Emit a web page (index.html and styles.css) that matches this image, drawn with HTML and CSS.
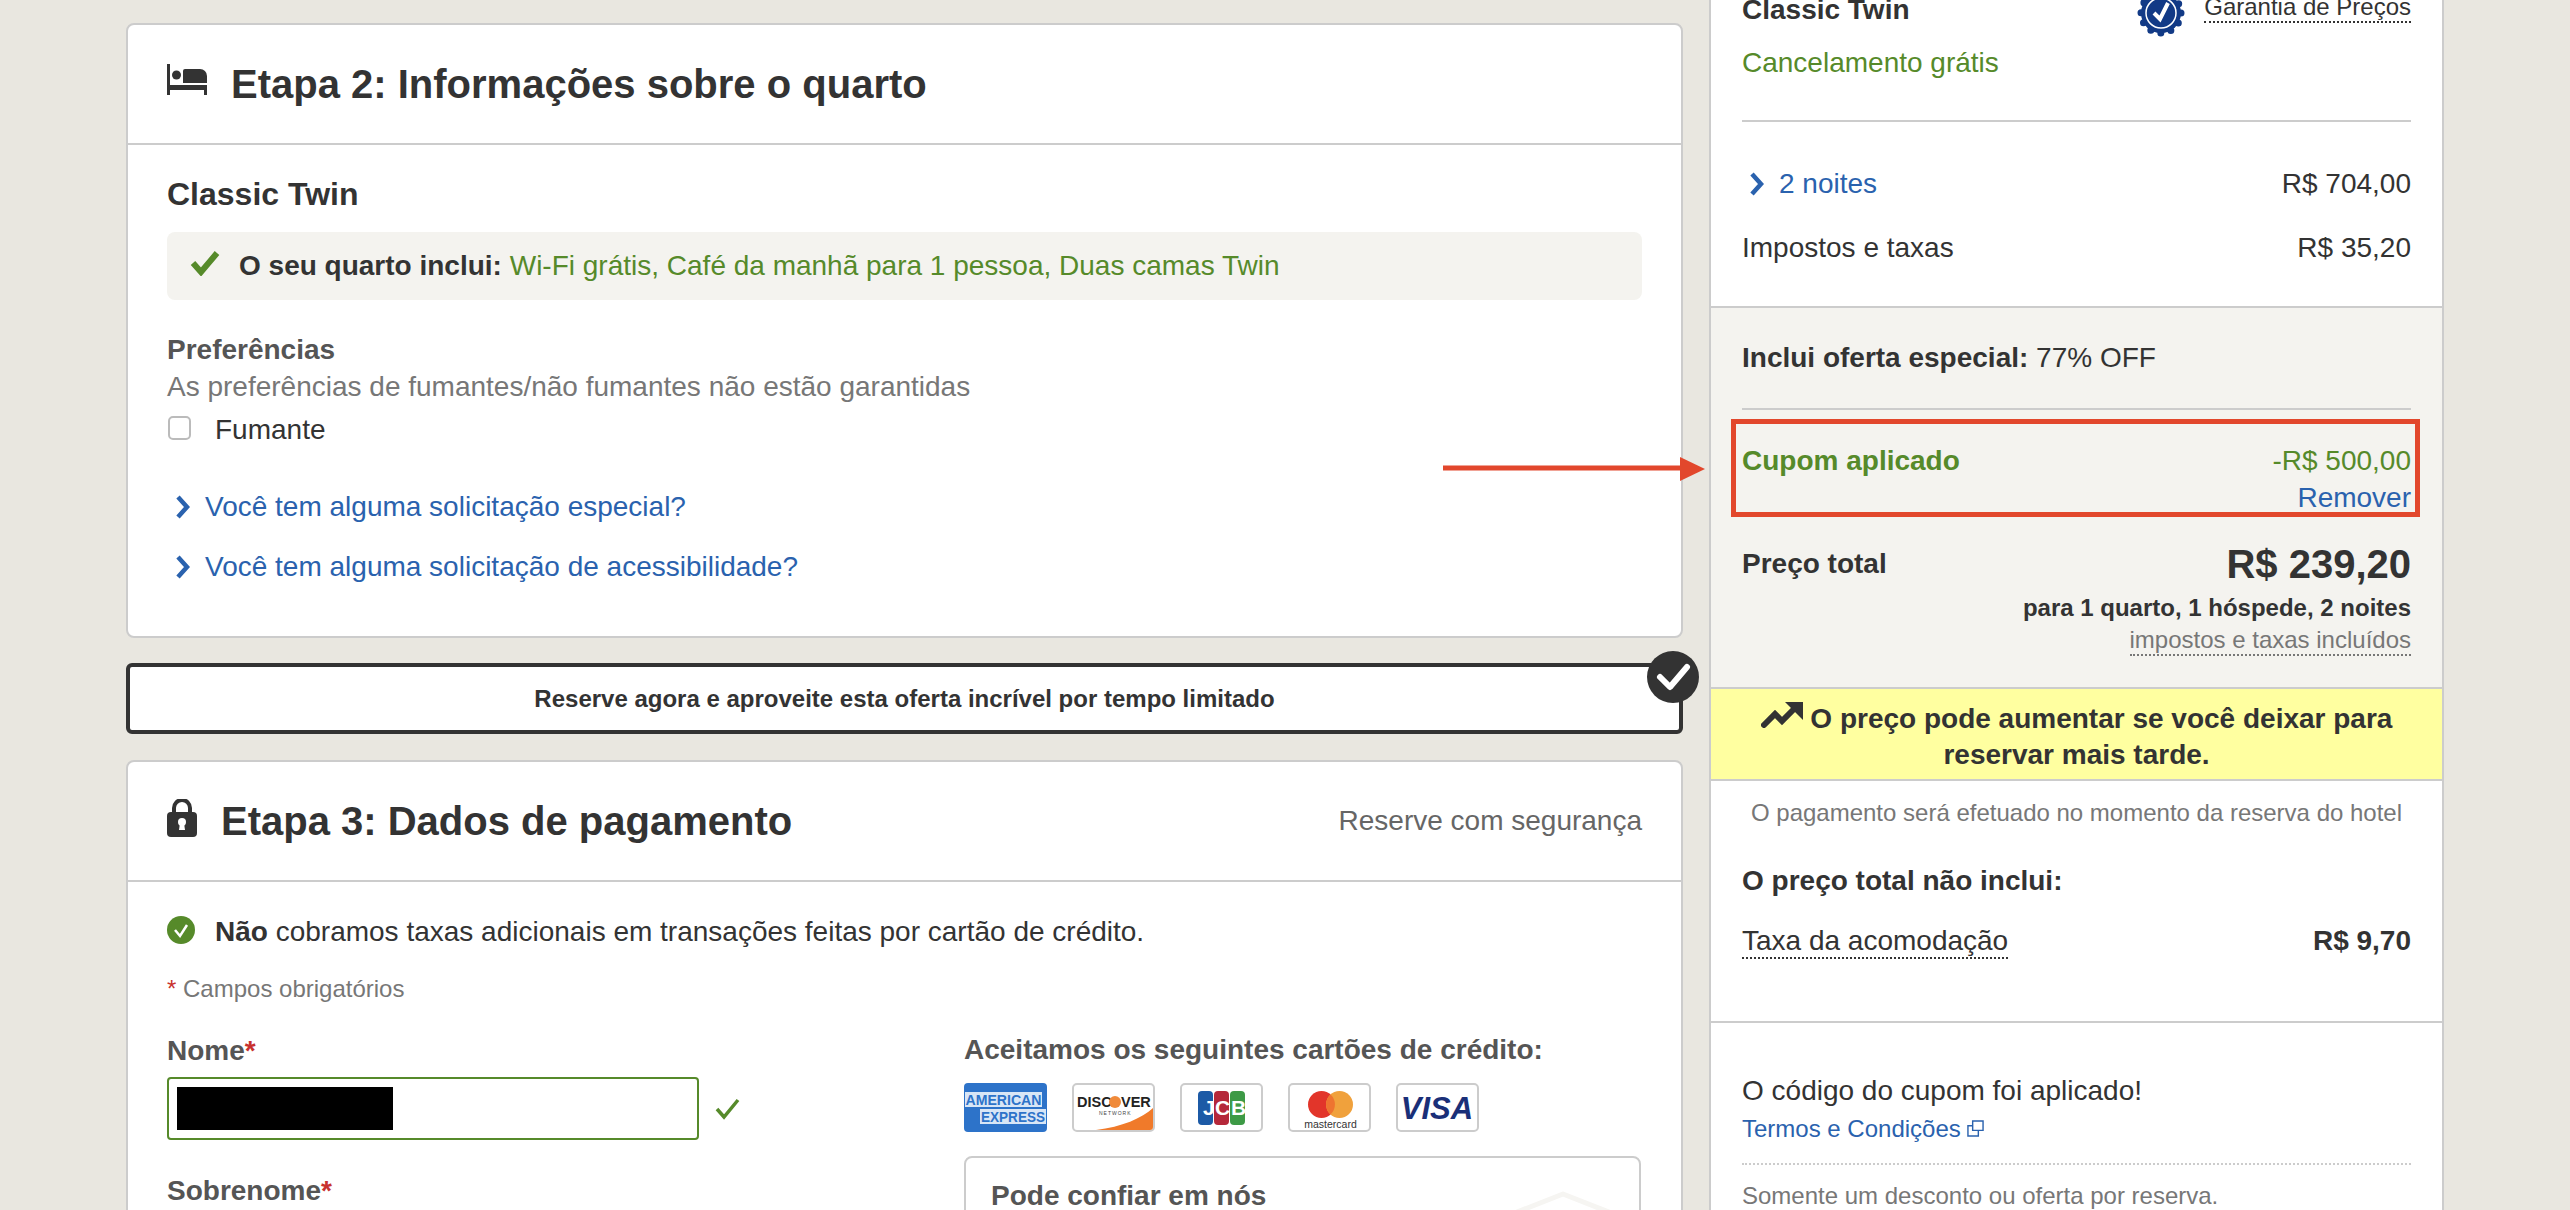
FILE: index.html
```html
<!DOCTYPE html>
<html lang="pt-BR">
<head>
  <meta charset="UTF-8" />
  <meta name="viewport" content="width=device-width, initial-scale=1" />
  <title>Etapa 2: Informações sobre o quarto</title>
  <link rel="stylesheet" href="styles.css">
</head>
<body>
  <div class="page">
    <main class="main-col">
      <section class="card">
        <header class="card-head">
          <svg class="icon-bed" viewBox="0 0 40 31"><path d="M0 0h3v21h37v10h-3v-5H3v5H0z" fill="#333"/><circle cx="9.500" cy="11" r="4.500" fill="#333"/><path d="M16 7a2 2 0 0 1 2-2h15a7 7 0 0 1 7 7v7H16z" fill="#333"/></svg>
          <h2 class="card-title">Etapa 2: Informações sobre o quarto</h2>
        </header>
        <div class="card-body room-body">
          <h3 class="room-name">Classic Twin</h3>
          <div class="includes">
            <svg class="icon-check" viewBox="0 0 30 25"><path d="M3 12l8 9L27 2" fill="none" stroke="#568a2a" stroke-width="6"/></svg>
            <b>O seu quarto inclui:</b>&nbsp;<span class="green">Wi-Fi grátis, Café da manhã para 1 pessoa, Duas camas Twin</span>
          </div>
          <div class="pref-title">Preferências</div>
          <div class="pref-note">As preferências de fumantes/não fumantes não estão garantidas</div>
          <label class="smoke"><span class="checkbox"></span>Fumante</label>
          <a class="more-link first-link"><svg class="chevron" viewBox="0 0 15 24"><path d="M3 2l9 10-9 10" fill="none" stroke="#2a62ae" stroke-width="4.500"/></svg>Você tem alguma solicitação especial?</a>
          <a class="more-link second-link"><svg class="chevron" viewBox="0 0 15 24"><path d="M3 2l9 10-9 10" fill="none" stroke="#2a62ae" stroke-width="4.500"/></svg>Você tem alguma solicitação de acessibilidade?</a>
        </div>
      </section>

      <div class="promo">Reserve agora e aproveite esta oferta incrível por tempo limitado</div>

      <section class="card pay-card">
        <header class="card-head">
          <svg class="icon-lock" viewBox="0 0 30 38"><path d="M7 15V9a8 8 0 0 1 16 0v6" fill="none" stroke="#333" stroke-width="4"/><rect y="13" width="30" height="25" rx="4" fill="#333"/><circle cx="15" cy="23" r="4" fill="#fff"/><path d="M13 24h4l1 7h-6z" fill="#fff"/></svg>
          <h2 class="card-title">Etapa 3: Dados de pagamento</h2>
          <span class="secure">Reserve com segurança</span>
        </header>
        <div class="card-body pay-body">
          <div class="no-fee">
            <svg class="icon-ok" viewBox="0 0 28 28"><circle cx="14" cy="14" r="14" fill="#568a2a"/><path d="M8 14l5 6 7-11" fill="none" stroke="#fff" stroke-width="2.500"/></svg>
            <span><b>Não</b> cobramos taxas adicionais em transações feitas por cartão de crédito.</span>
          </div>
          <div class="required"><span class="star">*</span> Campos obrigatórios</div>
          <div class="pay-grid">
            <div class="form-col">
              <label class="field-label">Nome<span class="star">*</span></label>
              <div class="field-row">
                <div class="field-input"><span class="redacted"></span></div>
                <svg class="icon-valid" viewBox="0 0 25 22"><path d="M2 11l7 8L23 2" fill="none" stroke="#568a2a" stroke-width="3.500"/></svg>
              </div>
              <label class="field-label last-name">Sobrenome<span class="star">*</span></label>
            </div>
            <div class="cards-col">
              <div class="cards-title">Aceitamos os seguintes cartões de crédito:</div>
              <div class="card-logos">
                <svg class="logo" viewBox="0 0 83 49"><rect width="83" height="49" rx="4" fill="#2d73c9"/><rect x="1" y="9" width="77" height="15" fill="#d8e6f6"/><rect x="16" y="26" width="66" height="15" fill="#d8e6f6"/><text x="1.500" y="22" class="t-amex" textLength="76" lengthAdjust="spacingAndGlyphs">AMERICAN</text><text x="17" y="39" class="t-amex" textLength="64" lengthAdjust="spacingAndGlyphs">EXPRESS</text></svg>
                <svg class="logo logo-line" viewBox="0 0 83 49"><rect x="1" y="1" width="81" height="47" rx="4" fill="#fff" stroke="#ccc" stroke-width="2"/><path d="M24 47c26-3 46-12 57-22v19a3 3 0 0 1-3 3z" fill="#f07a2a"/><text x="5" y="24" class="t-disc">DISC</text><circle cx="43" cy="19" r="6" fill="#f08a3a"/><text x="49" y="24" class="t-disc">VER</text><text x="27" y="32" class="t-net">NETWORK</text></svg>
                <svg class="logo logo-line" viewBox="0 0 83 49"><rect x="1" y="1" width="81" height="47" rx="4" fill="#fff" stroke="#ccc" stroke-width="2"/><rect x="18" y="8" width="15" height="34" rx="4" fill="#1c5aa6"/><rect x="34" y="8" width="15" height="34" rx="4" fill="#b5283a"/><rect x="50" y="8" width="15" height="34" rx="4" fill="#3d9a46"/><text x="23" y="32" class="t-jcb">J</text><text x="35" y="32" class="t-jcb">C</text><text x="51" y="32" class="t-jcb">B</text></svg>
                <svg class="logo logo-line" viewBox="0 0 83 49"><rect x="1" y="1" width="81" height="47" rx="4" fill="#fff" stroke="#ccc" stroke-width="2"/><circle cx="33.500" cy="21.500" r="13.500" fill="#e2352a"/><circle cx="51.500" cy="21.500" r="13.500" fill="#f0a13c"/><path d="M42.500 11.500a13.500 13.500 0 0 1 0 20 13.500 13.500 0 0 1 0-20z" fill="#ee7430"/><text x="42.500" y="45" class="t-mc">mastercard</text></svg>
                <svg class="logo logo-line" viewBox="0 0 83 49"><rect x="1" y="1" width="81" height="47" rx="4" fill="#fff" stroke="#ccc" stroke-width="2"/><text x="41" y="36" class="t-visa">VISA</text></svg>
              </div>
              <div class="trust-box">
                <svg class="trust-mark" viewBox="0 0 120 90"><path d="M60 3l56 22v62H4V25z" fill="none" stroke="#f6f5f2" stroke-width="5" stroke-linejoin="round"/></svg>
                <div class="trust-title">Pode confiar em nós</div>
              </div>
            </div>
          </div>
        </div>
      </section>
    </main>

    <aside class="summary">
      <section class="sum-part sum-room">
        <div class="room-top">
          <b class="sum-room-name">Classic Twin</b>
          <span class="guarantee">
            <svg class="badge" viewBox="0 0 48 48"><circle cx="24" cy="24" r="20" fill="#123a86" stroke="#123a86" stroke-width="7" stroke-linecap="round" stroke-dasharray="0 10.470"/><circle cx="24" cy="24" r="15" fill="none" stroke="#fff" stroke-width="1.500"/><path d="M17 24l6 6 8-16" fill="none" stroke="#fff" stroke-width="4"/></svg>
            <span class="dotted">Garantia de Preços</span>
          </span>
        </div>
        <div class="cancel green">Cancelamento grátis</div>
        <div class="sum-line"></div>
        <div class="sum-row nights-row">
          <a class="nights"><svg class="chevron chevron-sum" viewBox="0 0 15 24"><path d="M3 2l9 10-9 10" fill="none" stroke="#2a62ae" stroke-width="4.500"/></svg>2 noites</a>
          <span>R$ 704,00</span>
        </div>
        <div class="sum-row taxes-row"><span>Impostos e taxas</span><span>R$ 35,20</span></div>
      </section>

      <section class="sum-part sum-grey">
        <div class="offer"><b>Inclui oferta especial:</b> 77% OFF</div>
        <div class="sum-line offer-line"></div>
        <div class="sum-row coupon-row green"><b>Cupom aplicado</b><span>-R$ 500,00</span></div>
        <div class="remove-row"><a class="blue">Remover</a></div>
        <div class="sum-row total-row"><b class="total-label">Preço total</b><b class="total-price">R$ 239,20</b></div>
        <div class="total-for">para 1 quarto, 1 hóspede, 2 noites</div>
        <div class="total-inc"><span class="dotted-grey">impostos e taxas incluídos</span></div>
      </section>

      <section class="sum-warn">
        <svg class="icon-trend" viewBox="0 0 42 26"><path d="M3 23l11-11 7 7L34 6" fill="none" stroke="#333" stroke-width="6" stroke-linecap="round"/><path d="M24 0h18v18z" fill="#333"/></svg>
        O preço pode aumentar se você deixar para reservar mais tarde.
      </section>

      <section class="sum-part sum-extra">
        <div class="pay-note">O pagamento será efetuado no momento da reserva do hotel</div>
        <div class="not-inc">O preço total não inclui:</div>
        <div class="sum-row fee-row"><span class="dotted">Taxa da acomodação</span><b>R$ 9,70</b></div>
      </section>

      <section class="sum-part sum-coupon">
        <div class="coupon-ok">O código do cupom foi aplicado!</div>
        <div class="terms"><a class="blue">Termos e Condições</a><svg class="icon-ext" viewBox="0 0 18 18"><path d="M6 1h11v10H6zM6 6H1v11h11v-6" fill="none" stroke="#2a62ae" stroke-width="1.500"/></svg></div>
        <div class="coupon-line"></div>
        <div class="only-one">Somente um desconto ou oferta por reserva.</div>
      </section>
    </aside>
  </div>

  <!-- marcas por cima da captura -->
  <div class="mark-check">
    <svg viewBox="0 0 52 52"><circle cx="26" cy="26" r="26" fill="#333"/><path d="M13 26l10 10 17-20" fill="none" stroke="#fff" stroke-width="6" stroke-linecap="round" stroke-linejoin="round"/></svg>
  </div>
  <svg class="mark-arrow" viewBox="0 0 264 26"><path d="M1 12h238" stroke="#e2472c" stroke-width="5"/><path d="M238 1l25 12-25 12z" fill="#e2472c"/></svg>
  <div class="mark-box"></div>
</body>
</html>
```

FILE: styles.css
```css
* {
  box-sizing: border-box;
}
html, body {
  margin: 0;
  height: 1210px;
  overflow: hidden;
}
body {
  background: #e9e7e0;
  color: #333;
  font-family: "Liberation Sans", Arial, sans-serif;
  font-size: 28px;
  position: relative;
}
a {
  text-decoration: none;
}
h2, h3 {
  margin: 0;
}
.green { color: #568a2a; }
.blue { color: #2a62ae; }
.star { color: #c8322e; }

.page {
  display: flex;
  align-items: flex-start;
  gap: 26px;
  padding-left: 126px;
}
.main-col {
  width: 1557px;
  flex: none;
  padding-top: 23px;
}
.card {
  background: #fff;
  border: 2px solid #ccc;
  border-radius: 8px;
}
.card-head {
  height: 120px;
  padding: 0 39px;
  display: flex;
  align-items: center;
  border-bottom: 2px solid #ccc;
}
.card-title {
  font-size: 40px;
  line-height: 46px;
}
.icon-bed {
  width: 40px;
  height: 31px;
  margin: -10px 24px 0 0;
}
.icon-lock {
  width: 30px;
  height: 38px;
  margin: -6px 24px 0 0;
}
.secure {
  margin-left: auto;
  color: #666;
  font-size: 28px;
}
.card-body {
  padding: 0 39px;
}
.room-body {
  padding-top: 31px;
  padding-bottom: 49px;
}
.room-name {
  font-size: 32px;
  line-height: 36px;
}
.includes {
  height: 68px;
  margin-top: 20px;
  padding-left: 23px;
  display: flex;
  align-items: center;
  background: #f4f3ef;
  border-radius: 8px;
}
.icon-check {
  width: 30px;
  height: 25px;
  margin: -6px 19px 0 0;
}
.pref-title {
  margin-top: 34px;
  font-weight: bold;
  line-height: 32px;
  color: #555;
}
.pref-note {
  line-height: 42px;
  color: #777;
}
.smoke {
  display: flex;
  align-items: center;
  line-height: 42px;
  margin-top: 1px;
}
.checkbox {
  width: 23px;
  height: 24px;
  margin: -4px 24px 0 1px;
  border: 2px solid #bbb;
  border-radius: 5px;
}
.more-link {
  display: flex;
  align-items: center;
  line-height: 40px;
  color: #2a62ae;
}
.first-link { margin-top: 36px; }
.second-link { margin-top: 20px; }
.chevron {
  width: 15px;
  height: 24px;
  margin: 0 15px 0 8px;
}
.promo {
  height: 71px;
  margin-top: 25px;
  background: #fff;
  border: 4px solid #333;
  border-radius: 6px;
  font-size: 24px;
  font-weight: bold;
  line-height: 63px;
  text-align: center;
}
.pay-card {
  margin-top: 26px;
}
.pay-body {
  padding-top: 30px;
}
.no-fee {
  display: flex;
  align-items: center;
  line-height: 40px;
}
.icon-ok {
  width: 28px;
  height: 28px;
  margin: -4px 20px 0 0;
}
.required {
  margin-top: 22px;
  color: #777;
  font-size: 24px;
  line-height: 30px;
}
.pay-grid {
  display: grid;
  grid-template-columns: 797px 677px;
}
.field-label {
  display: block;
  margin-top: 29px;
  font-weight: bold;
  line-height: 36px;
  color: #555;
}
.last-name {
  margin-top: 33px;
}
.field-row {
  margin-top: 8px;
  display: flex;
  align-items: center;
}
.field-input {
  width: 532px;
  height: 63px;
  padding: 8px;
  border: 2px solid #568a2a;
  border-radius: 4px;
}
.redacted {
  display: block;
  width: 216px;
  height: 43px;
  background: #000;
}
.icon-valid {
  width: 25px;
  height: 22px;
  margin-left: 16px;
}
.cards-title {
  margin-top: 28px;
  font-weight: bold;
  line-height: 36px;
  color: #555;
}
.card-logos {
  display: flex;
  gap: 25px;
  margin-top: 15px;
}
.logo {
  width: 83px;
  height: 49px;
}
.t-amex {
  fill: #2d73c9;
  font-size: 15px;
  font-weight: bold;
}
.t-disc {
  fill: #222;
  font-size: 14.500px;
  font-weight: bold;
}
.t-net {
  fill: #444;
  font-size: 5px;
  letter-spacing: 1px;
}
.t-jcb {
  fill: #fff;
  font-size: 21px;
  font-weight: bold;
}
.t-mc {
  fill: #333;
  font-size: 10.500px;
  text-anchor: middle;
}
.t-visa {
  fill: #1a2f78;
  font-size: 31px;
  font-weight: bold;
  font-style: italic;
  text-anchor: middle;
}
.trust-box {
  height: 120px;
  margin-top: 24px;
  padding: 20px 25px;
  border: 2px solid #ccc;
  border-radius: 8px;
  position: relative;
}
.trust-mark {
  position: absolute;
  right: 16px;
  top: 33px;
  width: 120px;
  height: 90px;
}
.trust-title {
  position: relative;
  font-weight: bold;
  line-height: 36px;
  color: #555;
}

.summary {
  width: 735px;
  flex: none;
  margin-top: -20px;
  background: #fff;
  border-left: 2px solid #ccc;
  border-right: 2px solid #ccc;
}
.sum-part {
  padding: 0 31px;
}
.sum-room {
  padding-top: 12px;
  padding-bottom: 40px;
  border-bottom: 2px solid #ccc;
}
.room-top {
  display: flex;
  justify-content: space-between;
  line-height: 36px;
}
.guarantee {
  display: flex;
  align-items: center;
  height: 36px;
}
.badge {
  width: 48px;
  height: 48px;
  margin: 5px 19px 0 0;
}
.dotted {
  border-bottom: 2px dotted #333;
}
.guarantee .dotted {
  font-size: 24px;
  line-height: 29px;
  margin-top: -6px;
}
.cancel {
  margin-top: 17px;
  line-height: 36px;
}
.sum-line {
  height: 2px;
  margin-top: 39px;
  background: #ccc;
}
.sum-row {
  display: flex;
  justify-content: space-between;
  line-height: 36px;
}
.nights-row { margin-top: 44px; }
.taxes-row { margin-top: 28px; }
.nights {
  display: flex;
  align-items: center;
  color: #2a62ae;
}
.chevron-sum {
  margin: 0 15px 0 7px;
}
.sum-grey {
  padding-top: 32px;
  padding-bottom: 31px;
  background: #f4f3ef;
  border-bottom: 2px solid #ccc;
}
.offer {
  line-height: 36px;
}
.offer-line {
  margin-top: 32px;
}
.coupon-row {
  margin-top: 33px;
}
.remove-row {
  margin-top: 1px;
  line-height: 36px;
  text-align: right;
}
.total-row {
  margin-top: 26px;
  align-items: center;
  line-height: 44px;
}
.total-price {
  font-size: 40px;
}
.total-for {
  margin-top: 6px;
  font-size: 24px;
  font-weight: bold;
  line-height: 32px;
  text-align: right;
}
.total-inc {
  margin-top: 1px;
  font-size: 24px;
  text-align: right;
  color: #777;
}
.dotted-grey {
  display: inline-block;
  line-height: 29px;
  border-bottom: 2px dotted #777;
}
.sum-warn {
  height: 92px;
  padding: 12px 40px 0;
  background: #ffffa0;
  border-bottom: 2px solid #ccc;
  font-weight: bold;
  line-height: 36px;
  text-align: center;
}
.icon-trend {
  width: 42px;
  height: 26px;
  margin-right: 0;
}
.sum-extra {
  height: 242px;
  padding-top: 17px;
  border-bottom: 2px solid #ccc;
}
.pay-note {
  font-size: 24px;
  line-height: 30px;
  text-align: center;
  color: #777;
}
.not-inc {
  margin-top: 35px;
  font-weight: bold;
  line-height: 36px;
}
.fee-row {
  margin-top: 26px;
  line-height: 32px;
}
.sum-coupon {
  padding-top: 50px;
}
.coupon-ok {
  line-height: 36px;
}
.terms {
  margin-top: 4px;
  font-size: 24px;
  line-height: 32px;
}
.icon-ext {
  width: 17px;
  height: 17px;
  margin: 0 0 5px 6px;
  vertical-align: middle;
}
.coupon-line {
  margin-top: 18px;
  border-top: 2px dotted #ccc;
}
.only-one {
  margin-top: 15px;
  font-size: 24px;
  line-height: 32px;
  color: #777;
}

/* anotacoes soltas da captura */
.mark-check {
  position: absolute;
  left: 1647px;
  top: 651px;
  width: 52px;
  height: 52px;
}
.mark-arrow {
  position: absolute;
  left: 1442px;
  top: 456px;
  width: 264px;
  height: 26px;
}
.mark-box {
  position: absolute;
  left: 1731px;
  top: 419px;
  width: 689px;
  height: 98px;
  border: 5px solid #e2472c;
}
```
